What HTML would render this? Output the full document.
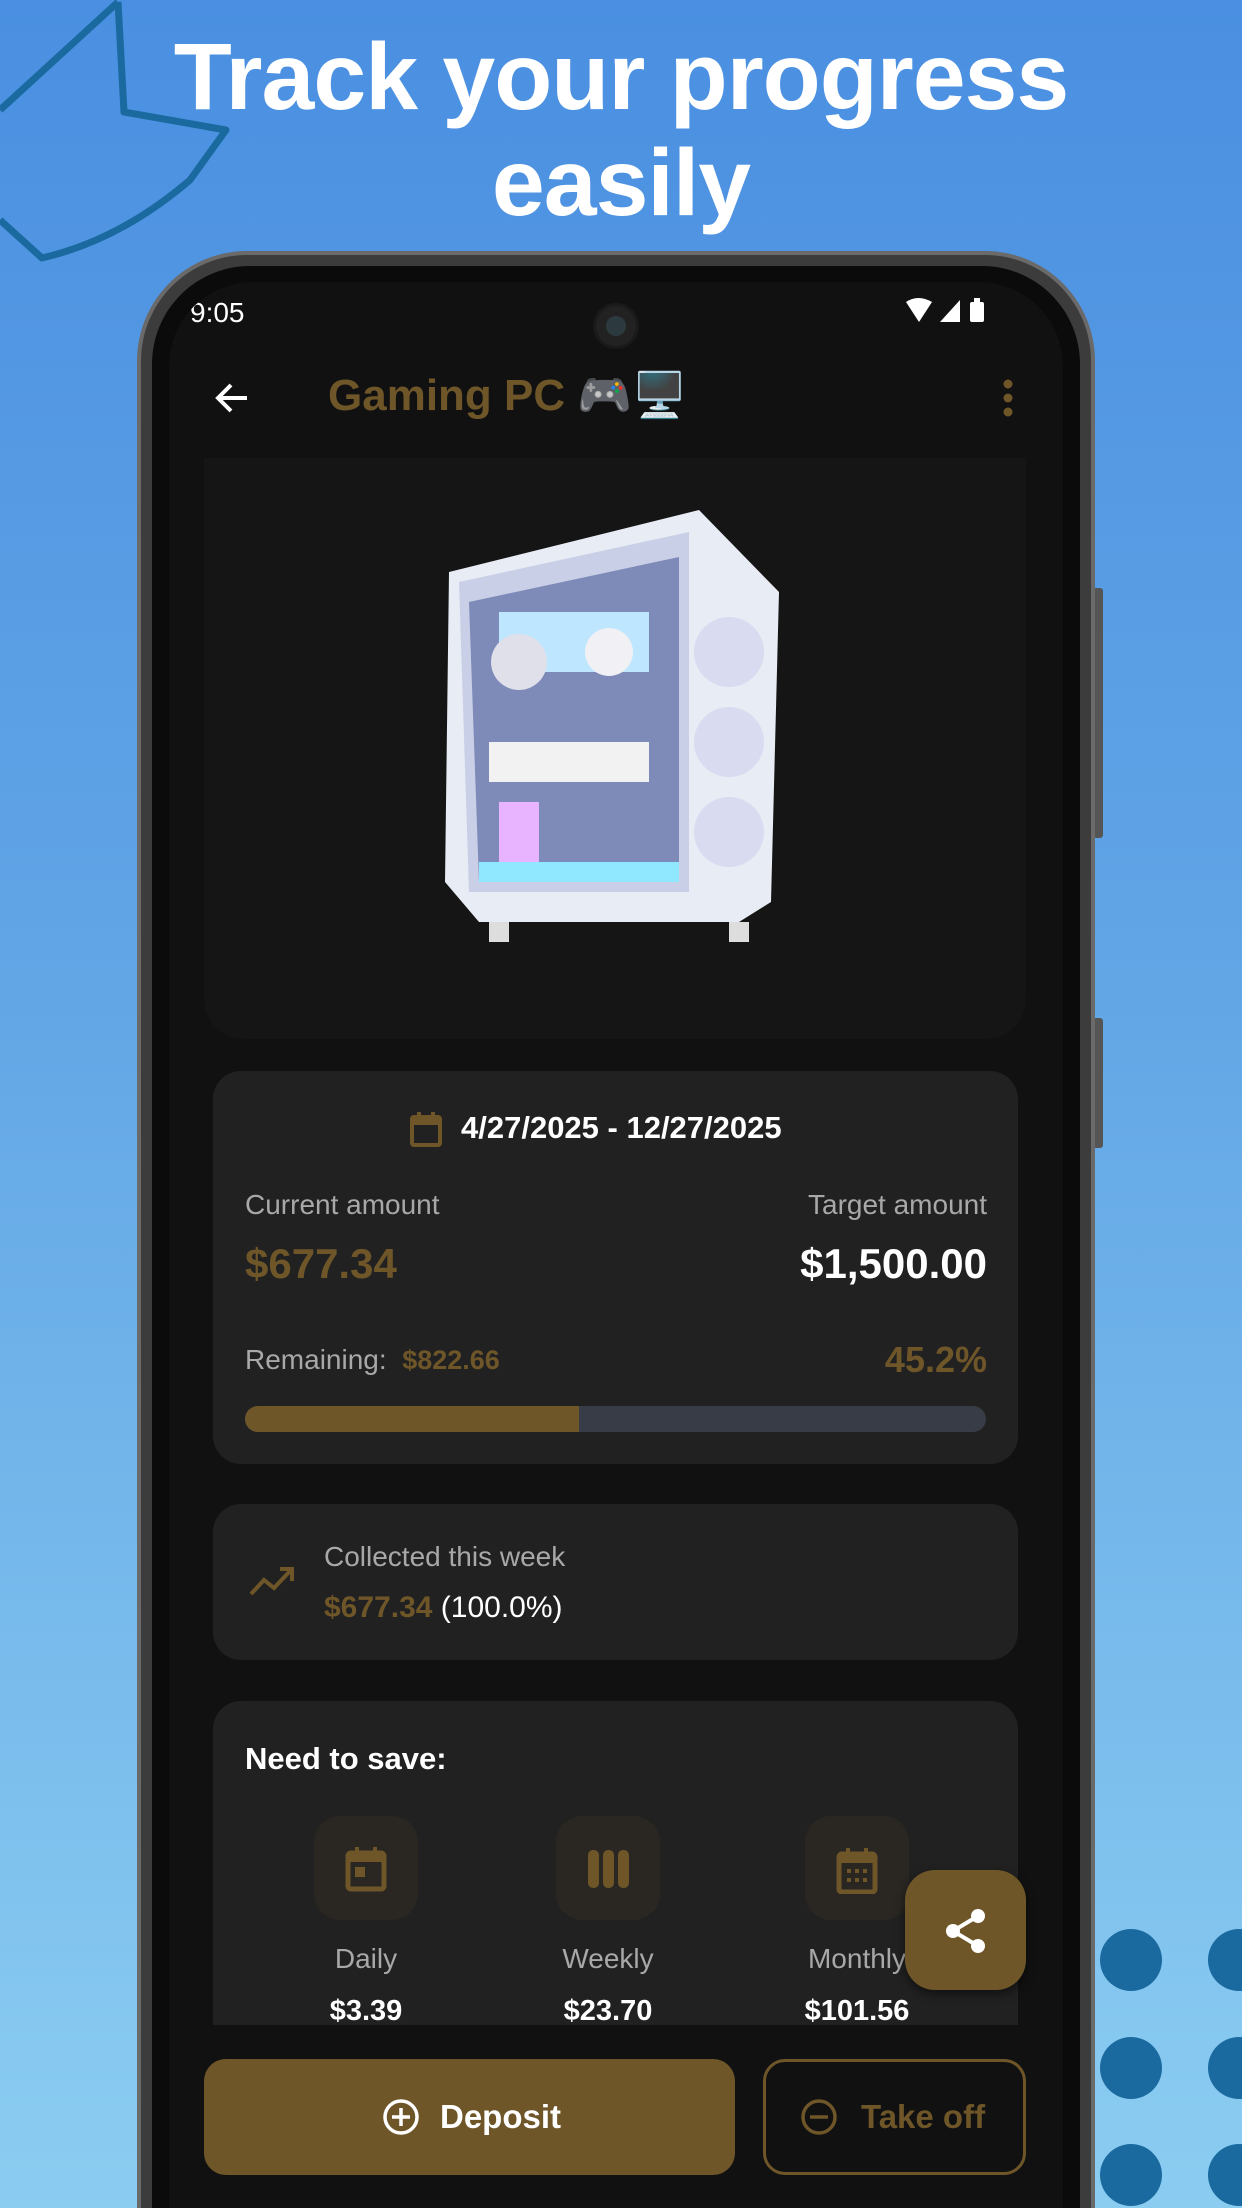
<!DOCTYPE html>
<html><head><meta charset="utf-8"><style>
*{margin:0;padding:0;box-sizing:border-box}
html,body{width:1242px;height:2208px;overflow:hidden}
body{position:relative;font-family:"Liberation Sans",sans-serif}
#wrap{position:absolute;left:0;top:0;width:1242px;height:2208px;overflow:hidden;background:linear-gradient(180deg,#4a8fe1 0%,#62a6e6 45%,#8bcdf1 100%)}
.a{position:absolute;white-space:nowrap}
.t{line-height:1}
.card{position:absolute;background:#212121;border-radius:28px}
</style></head><body><div id="wrap">
<svg class="a" style="left:0;top:0" width="260" height="270"><path d="M118 2 L124 112 L226 130 L190 180 Q120 240 42 258 L0 220 M0 110 L118 2" fill="none" stroke="#1a6aa0" stroke-width="7" stroke-linejoin="round"/></svg>
<div class="a t" style="left:0;width:1242px;text-align:center;top:24px;font-size:95px;font-weight:bold;color:#fff;line-height:106px;letter-spacing:-1px">Track your progress<br>easily</div>
<svg class="a" style="left:1090px;top:1920px" width="152" height="288"><g fill="#1a6aa0"><circle cx="41" cy="40" r="31"/><circle cx="149" cy="40" r="31"/><circle cx="41" cy="148" r="31"/><circle cx="149" cy="148" r="31"/><circle cx="41" cy="255" r="31"/><circle cx="149" cy="255" r="31"/></g></svg>
<div class="a" style="left:1093px;top:588px;width:10px;height:250px;background:#555;border-radius:3px"></div>
<div class="a" style="left:1093px;top:1018px;width:10px;height:130px;background:#555;border-radius:3px"></div>
<div class="a" style="left:137px;top:251px;width:958px;height:1957px;background:#3c3c3c;border-radius:110px 110px 0 0;border:4px solid #6a6a6a;border-bottom:0"></div>
<div class="a" style="left:152px;top:266px;width:928px;height:1942px;background:#0b0b0b;border-radius:98px 98px 0 0"></div>
<div class="a" style="left:169px;top:282px;width:894px;height:1926px;background:#111;border-radius:84px 84px 0 0;overflow:hidden">
 <div class="a t" style="left:21px;top:17px;font-size:28px;color:#fff">9:05</div>
 <div class="a" style="left:424px;top:21px;width:46px;height:46px;border-radius:50%;background:#222;border:3px solid #1a1a1a"><div style="margin:10px;width:20px;height:20px;border-radius:50%;background:#2c3a40"></div></div>
 <svg class="a" style="left:735px;top:14px" width="100" height="32"><path d="M2 6 Q14 -2 28 6 L15 26 Z" fill="#fff"/><path d="M36 26 L56 4 L56 26 Z" fill="#fff"/><rect x="66" y="6" width="14" height="20" rx="2" fill="#fff"/><rect x="70" y="2" width="6" height="5" fill="#fff"/></svg>
 <svg class="a" style="left:44px;top:96px" width="40" height="40"><path d="M34 20 H6 M18 7 L5 20 L18 33" fill="none" stroke="#fff" stroke-width="4"/></svg>
 <div class="a t" style="left:159px;top:92px;font-size:44px;font-weight:bold;color:#6e5629">Gaming PC 🎮🖥️</div>
 <svg class="a" style="left:829px;top:96px" width="20" height="44"><g fill="#6e5629"><circle cx="10" cy="6" r="4.5"/><circle cx="10" cy="20" r="4.5"/><circle cx="10" cy="34" r="4.5"/></g></svg>
 <div class="a" style="left:35px;top:176px;width:822px;height:581px;background:#151515;border-radius:0 0 40px 40px"></div>
 <svg class="a" style="left:270px;top:220px" width="360" height="460" viewBox="0 0 360 460">
  <path d="M10 70 L260 8 L340 90 L332 400 L300 420 L40 420 L6 380 Z" fill="#e8ecf4"/>
  <path d="M20 80 L250 30 L250 390 L30 390 Z" fill="#c9cfe6"/>
  <path d="M30 100 L240 55 L240 380 L40 380 Z" fill="#7e8ab8"/>
  <rect x="60" y="110" width="150" height="60" fill="#bfe6ff"/>
  <rect x="50" y="240" width="160" height="40" fill="#f2f2f2"/>
  <rect x="60" y="300" width="40" height="60" fill="#e9b4ff"/>
  <path d="M40 360 L240 360 L240 380 L40 380Z" fill="#8fe8ff"/>
  <circle cx="290" cy="150" r="35" fill="#d9dcf0"/><circle cx="290" cy="240" r="35" fill="#d9dcf0"/><circle cx="290" cy="330" r="35" fill="#d9dcf0"/>
  <circle cx="80" cy="160" r="28" fill="#e0e0ea"/><circle cx="170" cy="150" r="24" fill="#f0f0f5"/>
  <rect x="50" y="420" width="20" height="20" fill="#ddd"/><rect x="290" y="420" width="20" height="20" fill="#ddd"/>
 </svg>
 <div class="card" style="left:44px;top:789px;width:805px;height:393px"></div>
 <svg class="a" style="left:240px;top:829px" width="34" height="36"><rect x="3" y="6" width="28" height="28" rx="2" fill="none" stroke="#6e5629" stroke-width="4"/><rect x="3" y="6" width="28" height="8" fill="#6e5629"/><rect x="8" y="1" width="4" height="8" fill="#6e5629"/><rect x="22" y="1" width="4" height="8" fill="#6e5629"/></svg>
 <div class="a t" style="left:292px;top:830px;font-size:31px;font-weight:bold;color:#fff">4/27/2025 - 12/27/2025</div>
 <div class="a t" style="left:76px;top:909px;font-size:28px;color:#a8a8a8">Current amount</div>
 <div class="a t" style="right:76px;top:909px;font-size:28px;color:#a8a8a8;text-align:right">Target amount</div>
 <div class="a t" style="left:76px;top:961px;font-size:42px;font-weight:bold;color:#6e5629">$677.34</div>
 <div class="a t" style="right:76px;top:961px;font-size:42px;font-weight:bold;color:#fff">$1,500.00</div>
 <div class="a t" style="left:76px;top:1064px;font-size:28px;color:#a8a8a8">Remaining:&nbsp; <span style="color:#6e5629;font-weight:bold;font-size:27px">$822.66</span></div>
 <div class="a t" style="right:76px;top:1060px;font-size:36px;font-weight:bold;color:#6e5629">45.2%</div>
 <div class="a" style="left:76px;top:1124px;width:741px;height:26px;border-radius:13px;background:#383c46;overflow:hidden"><div style="width:334px;height:26px;background:#6e5629"></div></div>
 <div class="card" style="left:44px;top:1222px;width:805px;height:156px"></div>
 <svg class="a" style="left:79px;top:1282px" width="48" height="34"><path d="M3 30 L16 16 L26 24 L42 7 M32 5 H44 V17" fill="none" stroke="#6e5629" stroke-width="4"/></svg>
 <div class="a t" style="left:155px;top:1261px;font-size:28px;color:#a8a8a8">Collected this week</div>
 <div class="a t" style="left:155px;top:1311px;font-size:30px;color:#fff"><b style="color:#6e5629">$677.34</b> (100.0%)</div>
 <div class="card" style="left:44px;top:1419px;width:805px;height:380px;border-radius:28px 28px 0 0"></div>
 <div class="a t" style="left:76px;top:1461px;font-size:31px;font-weight:bold;color:#fff">Need to save:</div>
 <div class="a" style="left:145px;top:1534px;width:104px;height:104px;border-radius:26px;background:#2a2722"></div>
 <div class="a" style="left:387px;top:1534px;width:104px;height:104px;border-radius:26px;background:#2a2722"></div>
 <div class="a" style="left:636px;top:1534px;width:104px;height:104px;border-radius:26px;background:#2a2722"></div>
 <svg class="a" style="left:176px;top:1565px" width="42" height="46"><rect x="3" y="6" width="36" height="36" rx="3" fill="none" stroke="#6e5629" stroke-width="5"/><rect x="3" y="6" width="36" height="9" fill="#6e5629"/><rect x="10" y="0" width="4" height="8" fill="#6e5629"/><rect x="28" y="0" width="4" height="8" fill="#6e5629"/><rect x="10" y="20" width="10" height="10" fill="#6e5629"/></svg>
 <svg class="a" style="left:418px;top:1568px" width="44" height="40"><g fill="#6e5629"><rect x="1" y="0" width="11" height="38" rx="5"/><rect x="16" y="0" width="11" height="38" rx="5"/><rect x="31" y="0" width="11" height="38" rx="5"/></g></svg>
 <svg class="a" style="left:667px;top:1566px" width="42" height="46"><rect x="3" y="6" width="36" height="38" rx="3" fill="none" stroke="#6e5629" stroke-width="5"/><rect x="3" y="6" width="36" height="9" fill="#6e5629"/><rect x="10" y="0" width="4" height="8" fill="#6e5629"/><rect x="28" y="0" width="4" height="8" fill="#6e5629"/><g fill="#6e5629"><rect x="11" y="21" width="4" height="4"/><rect x="19" y="21" width="4" height="4"/><rect x="27" y="21" width="4" height="4"/><rect x="11" y="30" width="4" height="4"/><rect x="19" y="30" width="4" height="4"/><rect x="27" y="30" width="4" height="4"/></g></svg>
 <div class="a t" style="left:97px;width:200px;text-align:center;top:1663px;font-size:28px;color:#a8a8a8">Daily</div>
 <div class="a t" style="left:339px;width:200px;text-align:center;top:1663px;font-size:28px;color:#a8a8a8">Weekly</div>
 <div class="a t" style="left:588px;width:200px;text-align:center;top:1663px;font-size:28px;color:#a8a8a8">Monthly</div>
 <div class="a t" style="left:97px;width:200px;text-align:center;top:1715px;font-size:29px;font-weight:bold;color:#fff">$3.39</div>
 <div class="a t" style="left:339px;width:200px;text-align:center;top:1715px;font-size:29px;font-weight:bold;color:#fff">$23.70</div>
 <div class="a t" style="left:588px;width:200px;text-align:center;top:1715px;font-size:29px;font-weight:bold;color:#fff">$101.56</div>
 <div class="a" style="left:736px;top:1588px;width:121px;height:120px;border-radius:30px;background:#6e5629;box-shadow:0 4px 10px rgba(0,0,0,.5)"></div>
 <svg class="a" style="left:774px;top:1625px" width="46" height="48"><g fill="#fff"><circle cx="35" cy="9" r="7"/><circle cx="10" cy="24" r="7"/><circle cx="35" cy="39" r="7"/></g><path d="M35 9 L10 24 L35 39" stroke="#fff" stroke-width="4" fill="none"/></svg>
 <div class="a" style="left:0;top:1743px;width:894px;height:183px;background:#111"></div>
 <div class="a" style="left:35px;top:1777px;width:531px;height:116px;border-radius:22px;background:#6e5629"></div>
 <svg class="a" style="left:213px;top:1816px" width="38" height="38"><circle cx="19" cy="19" r="16" fill="none" stroke="#fff" stroke-width="3.5"/><path d="M19 10 V28 M10 19 H28" stroke="#fff" stroke-width="3.5"/></svg>
 <div class="a t" style="left:271px;top:1818px;font-size:33px;font-weight:bold;color:#fff">Deposit</div>
 <div class="a" style="left:594px;top:1777px;width:263px;height:116px;border-radius:22px;border:3px solid #6e5629"></div>
 <svg class="a" style="left:631px;top:1816px" width="38" height="38"><circle cx="19" cy="19" r="16" fill="none" stroke="#6e5629" stroke-width="3.5"/><path d="M10 19 H28" stroke="#6e5629" stroke-width="3.5"/></svg>
 <div class="a t" style="left:692px;top:1818px;font-size:33px;font-weight:bold;color:#6e5629">Take off</div>
</div>
</div></body></html>
